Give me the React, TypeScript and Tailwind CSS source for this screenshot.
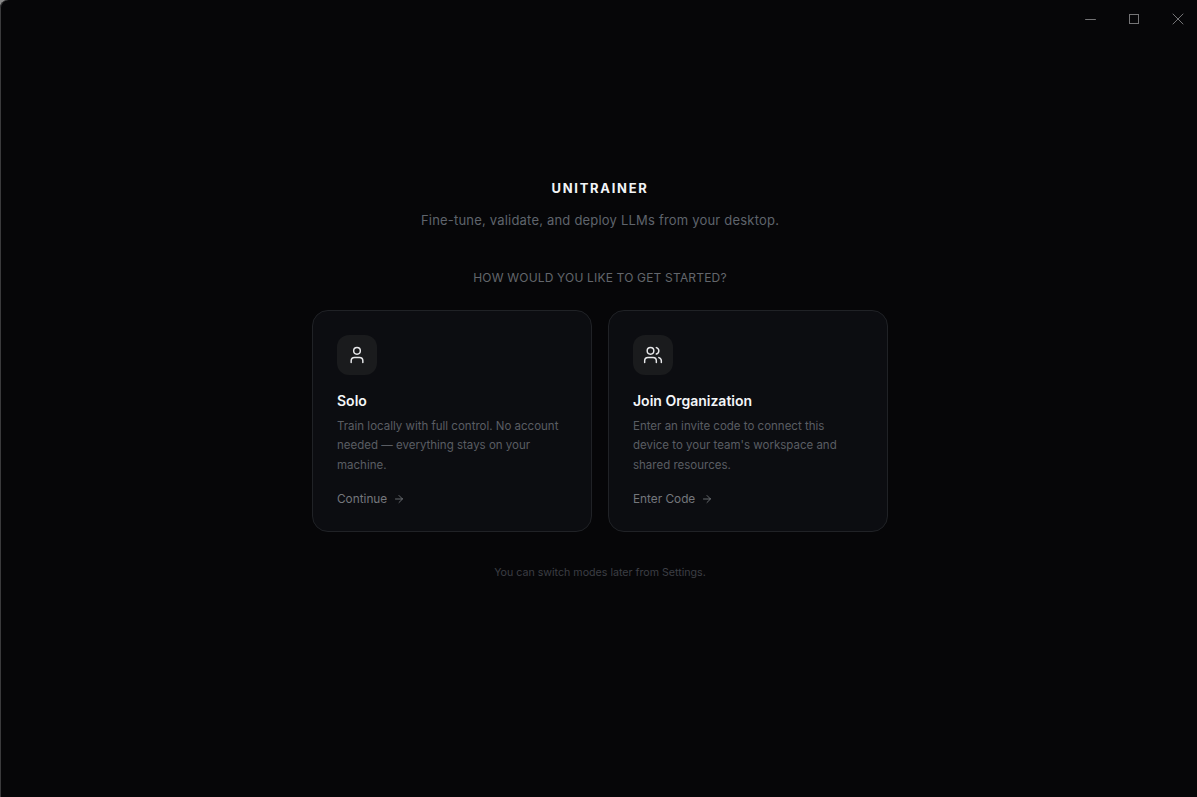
import { ArrowRight, Minus, User, Users, X } from "lucide-react";

const modes = [
  {
    title: "Solo",
    text: "Train locally with full control. No account needed — everything stays on your machine.",
    action: "Continue",
    Icon: User,
  },
  {
    title: "Join Organization",
    text: "Enter an invite code to connect this device to your team's workspace and shared resources.",
    action: "Enter Code",
    Icon: Users,
  },
];

export default function App() {
  return (
    <div className="relative h-[797px] w-[1197px] overflow-hidden bg-[#8a8a8a] font-['Inter',sans-serif]">
      {/* window is a touch wider than the capture, so the content centres on x=600 */}
      <div className="relative h-full w-[1200px] rounded-tl-[8px] bg-[#060608] shadow-[inset_1px_0_0_#3a3a3c]">
        <div className="absolute right-0 top-0 flex h-[38px] text-[#747476]">
          <button className="flex w-[44px] items-center justify-center">
            <Minus size={17} strokeWidth={1.4} />
          </button>
          <button className="flex w-[44px] items-center justify-center">
            <svg width="10" height="10" viewBox="0 0 10 10" fill="none" stroke="currentColor">
              <rect x="0.5" y="0.5" width="9" height="9" />
            </svg>
          </button>
          <button className="flex w-[44px] items-center justify-center">
            <X size={20} strokeWidth={1.2} />
          </button>
        </div>

        <div className="flex flex-col items-center pt-[179px]">
          <h1 className="text-[13px] font-bold leading-[18px] tracking-[1.7px] text-[#f2f4f7]">UNITRAINER</h1>
          <p className="mt-[13px] text-[13px] leading-[20px] tracking-[0.2px] text-[#5f646c]">
            Fine-tune, validate, and deploy LLMs from your desktop.
          </p>
          <p className="mt-[40px] text-[12px] leading-[16px] tracking-[0.18px] text-[#63666c]">
            HOW WOULD YOU LIKE TO GET STARTED?
          </p>

          <div className="mt-[24px] flex gap-[16px]">
            {modes.map(({ title, text, action, Icon }) => (
              <div
                key={title}
                className="h-[222px] w-[280px] rounded-[16px] border border-[#202226] bg-[#0c0d11] p-[24px]"
              >
                <div className="flex h-[40px] w-[40px] items-center justify-center rounded-[12px] bg-[#1a1b1d] text-[#e8e9eb]">
                  <Icon size={20} strokeWidth={1.75} />
                </div>
                <h2 className="mt-[16px] text-[14px] font-semibold leading-[20px] text-[#f4f6f8]">{title}</h2>
                <p className="mt-[5.5px] text-[11.5px] leading-[19.5px] text-[#5a5d63]">{text}</p>
                <div className="mt-[15.5px] flex items-center gap-[6px] text-[11.8px] leading-[16px] text-[#74777c]">
                  <span>{action}</span>
                  <ArrowRight size={12} strokeWidth={1.75} />
                </div>
              </div>
            ))}
          </div>

          <p className="mt-[33px] text-[10.65px] leading-[16px] text-[#3c3e44]">You can switch modes later from Settings.</p>
        </div>
      </div>
    </div>
  );
}
